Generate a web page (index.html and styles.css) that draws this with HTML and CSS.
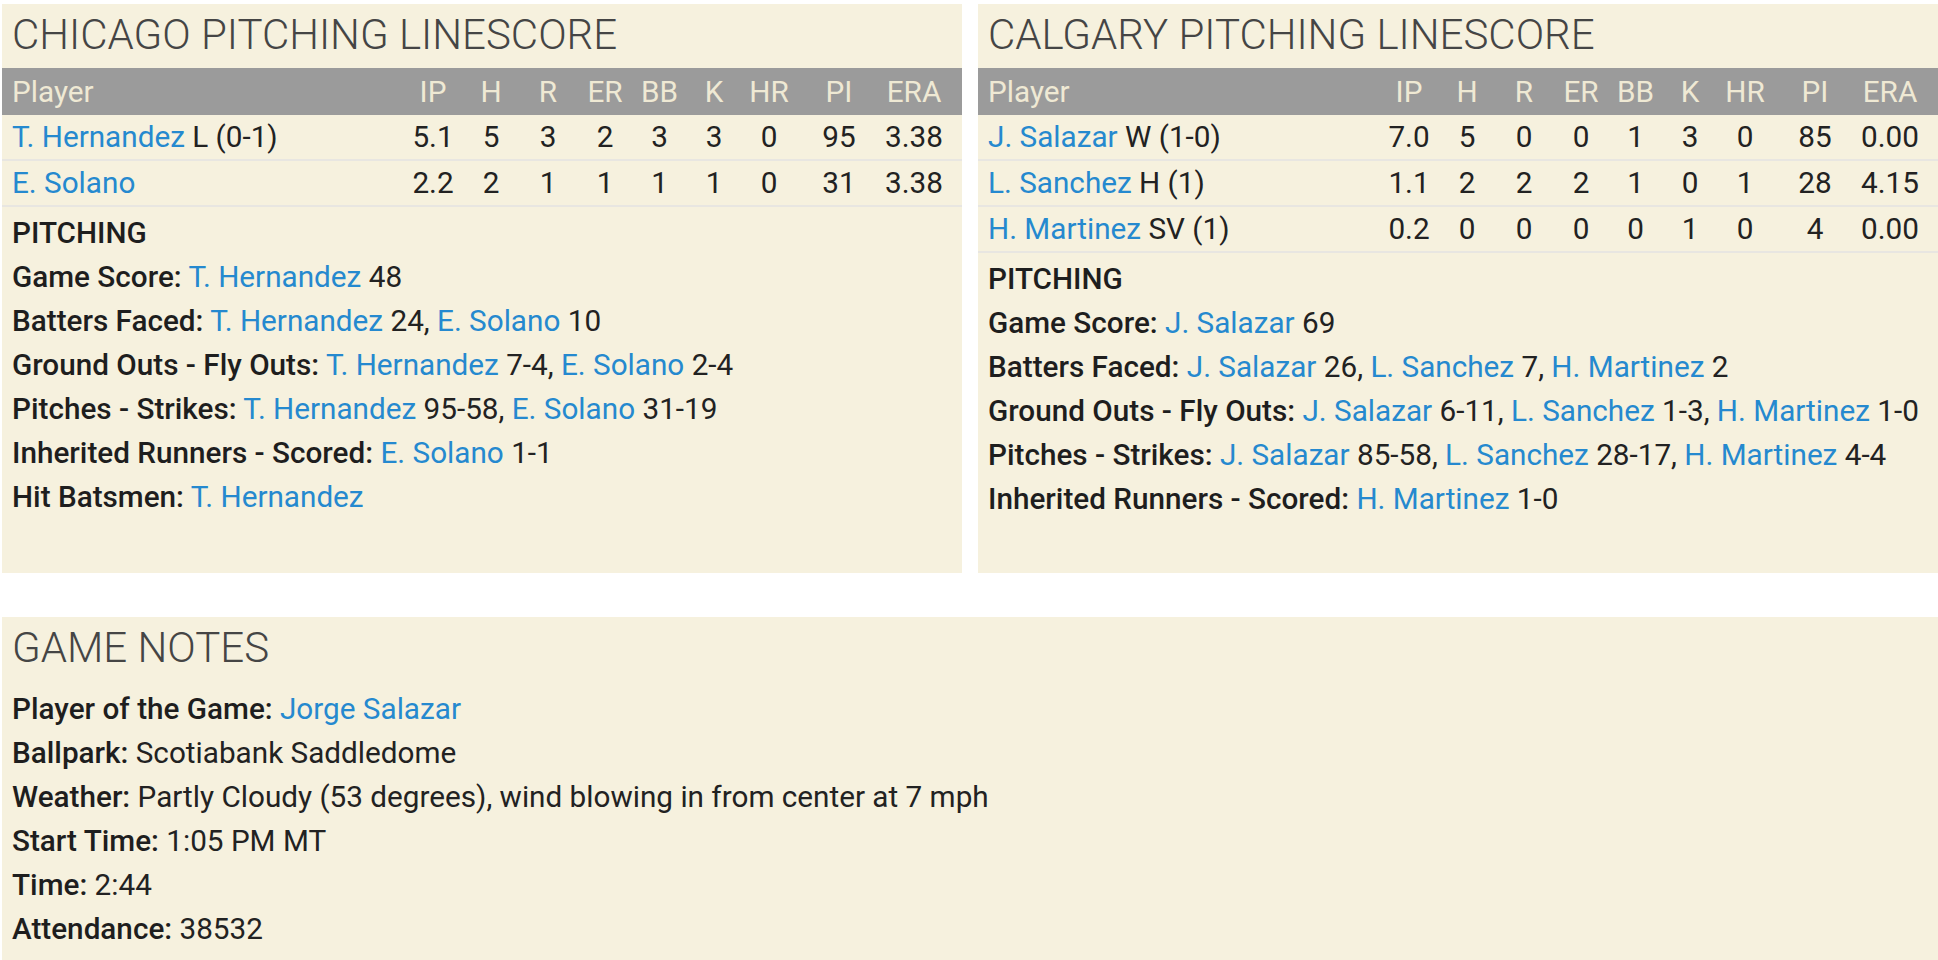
FILE: index.html
```html
<!DOCTYPE html>
<html lang="en">
<head>
<meta charset="utf-8">
<title>Box Score</title>
<link rel="stylesheet" href="styles.css">
</head>
<body>
<div class="page">
  <div class="top-row">
    <section class="panel">
      <h2 class="panel-title">CHICAGO PITCHING LINESCORE</h2>
      <div class="linescore">
        <div class="ls-row ls-head">
          <span class="c-player">Player</span><span>IP</span><span>H</span><span>R</span><span>ER</span><span>BB</span><span>K</span><span>HR</span><span>PI</span><span class="c-era">ERA</span>
        </div>
        <div class="ls-row">
          <span class="c-player"><a>T. Hernandez</a> L (0-1)</span><span>5.1</span><span>5</span><span>3</span><span>2</span><span>3</span><span>3</span><span>0</span><span>95</span><span class="c-era">3.38</span>
        </div>
        <div class="ls-row">
          <span class="c-player"><a>E. Solano</a></span><span>2.2</span><span>2</span><span>1</span><span>1</span><span>1</span><span>1</span><span>0</span><span>31</span><span class="c-era">3.38</span>
        </div>
      </div>
      <div class="notes">
        <div class="note-head">PITCHING</div>
        <div class="note"><b>Game Score:</b> <a>T. Hernandez</a> 48</div>
        <div class="note"><b>Batters Faced:</b> <a>T. Hernandez</a> 24, <a>E. Solano</a> 10</div>
        <div class="note"><b>Ground Outs - Fly Outs:</b> <a>T. Hernandez</a> 7-4, <a>E. Solano</a> 2-4</div>
        <div class="note"><b>Pitches - Strikes:</b> <a>T. Hernandez</a> 95-58, <a>E. Solano</a> 31-19</div>
        <div class="note"><b>Inherited Runners - Scored:</b> <a>E. Solano</a> 1-1</div>
        <div class="note"><b>Hit Batsmen:</b> <a>T. Hernandez</a></div>
      </div>
    </section>
    <section class="panel">
      <h2 class="panel-title">CALGARY PITCHING LINESCORE</h2>
      <div class="linescore">
        <div class="ls-row ls-head">
          <span class="c-player">Player</span><span>IP</span><span>H</span><span>R</span><span>ER</span><span>BB</span><span>K</span><span>HR</span><span>PI</span><span class="c-era">ERA</span>
        </div>
        <div class="ls-row">
          <span class="c-player"><a>J. Salazar</a> W (1-0)</span><span>7.0</span><span>5</span><span>0</span><span>0</span><span>1</span><span>3</span><span>0</span><span>85</span><span class="c-era">0.00</span>
        </div>
        <div class="ls-row">
          <span class="c-player"><a>L. Sanchez</a> H (1)</span><span>1.1</span><span>2</span><span>2</span><span>2</span><span>1</span><span>0</span><span>1</span><span>28</span><span class="c-era">4.15</span>
        </div>
        <div class="ls-row">
          <span class="c-player"><a>H. Martinez</a> SV (1)</span><span>0.2</span><span>0</span><span>0</span><span>0</span><span>0</span><span>1</span><span>0</span><span>4</span><span class="c-era">0.00</span>
        </div>
      </div>
      <div class="notes">
        <div class="note-head">PITCHING</div>
        <div class="note"><b>Game Score:</b> <a>J. Salazar</a> 69</div>
        <div class="note"><b>Batters Faced:</b> <a>J. Salazar</a> 26, <a>L. Sanchez</a> 7, <a>H. Martinez</a> 2</div>
        <div class="note"><b>Ground Outs - Fly Outs:</b> <a>J. Salazar</a> 6-11, <a>L. Sanchez</a> 1-3, <a>H. Martinez</a> 1-0</div>
        <div class="note"><b>Pitches - Strikes:</b> <a>J. Salazar</a> 85-58, <a>L. Sanchez</a> 28-17, <a>H. Martinez</a> 4-4</div>
        <div class="note"><b>Inherited Runners - Scored:</b> <a>H. Martinez</a> 1-0</div>
      </div>
    </section>
  </div>
  <section class="panel panel-wide">
    <h2 class="panel-title">GAME NOTES</h2>
    <div class="notes game-notes">
      <div class="note"><b>Player of the Game:</b> <a>Jorge Salazar</a></div>
      <div class="note"><b>Ballpark:</b> Scotiabank Saddledome</div>
      <div class="note"><b>Weather:</b> Partly Cloudy (53 degrees), wind blowing in from center at 7 mph</div>
      <div class="note"><b>Start Time:</b> 1:05 PM MT</div>
      <div class="note"><b>Time:</b> 2:44</div>
      <div class="note"><b>Attendance:</b> 38532</div>
    </div>
  </section>
</div>
</body>
</html>
```
FILE: styles.css
```css
* { box-sizing: border-box; }
html, body { margin: 0; padding: 0; background: #ffffff; }
body {
  font-family: Roboto, "Liberation Sans", sans-serif;
  font-size: 29.7px;
  color: #222222;
  overflow: hidden;
}
.page {
  padding: 4px 0 0 2px;
  display: flex;
  flex-direction: column;
  gap: 44px;
}
.top-row {
  display: flex;
  gap: 16px;
  align-items: stretch;
}
.panel {
  background: #f6f1de;
  flex: 1 1 0;
  padding-bottom: 52px;
}
.panel-title {
  margin: 0;
  padding: 9px 10px 11px;
  font-size: 42px;
  line-height: 44px;
  font-weight: 300;
  color: #454545;
  letter-spacing: 0;
}
.ls-row {
  display: grid;
  grid-template-columns: 1fr 56px 60px 54px 60px 49px 60px 50px 90px 60px;
  padding-right: 18px;
  height: 46px;
  align-items: center;
  border-bottom: 2px solid #e8e6e1;
  text-align: center;
  line-height: 44px;
}
.ls-head {
  background: #9b9b9b;
  color: #efe9d4;
  height: 47px;
  border-bottom: none;
}
.c-player {
  text-align: left;
  padding-left: 10px;
  white-space: nowrap;
}
a { color: #2589cf; text-decoration: none; }
.notes {
  padding: 4px 10px 0;
}
.note, .note-head {
  line-height: 44px;
  height: 44px;
  white-space: nowrap;
}
.note-head, .note b { font-weight: 500; color: #1e1e1e; }
.panel-wide { padding-bottom: 20px; }
.game-notes { padding-top: 6px; }
```
